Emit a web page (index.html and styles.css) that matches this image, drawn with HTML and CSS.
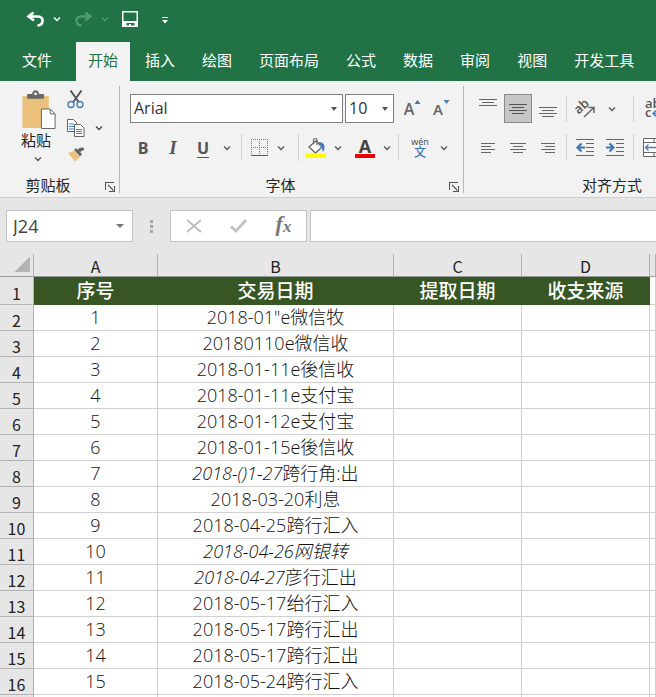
FILE: index.html
```html
<!DOCTYPE html>
<html lang="zh-CN">
<head>
<meta charset="utf-8">
<title>Excel</title>
<link rel="stylesheet" href="styles.css">
</head>
<body>
<svg class="defs" aria-hidden="true">
  <symbol id="chev" viewBox="0 0 8 6"><path d="M1 1.5 4 4.5 7 1.5" fill="none" stroke="currentColor" stroke-width="1.3"/></symbol>
  <symbol id="launch" viewBox="0 0 10 10"><path d="M.5 8V.5H9M3 3l5.5 5.5M9.500 4v5.500H4" fill="none" stroke="#555" stroke-width="1.100"/></symbol>
</svg>
<header class="top">
  <div class="quick">
    <button class="undo" aria-label="撤消"><svg width="19" height="17" viewBox="0 0 19 17"><path d="M7.500 1.500 2.500 5.500l5.500 4M3 5.500h9c6.500 0 6 8.500-.5 9" fill="none" stroke="#fff" stroke-width="2.600"/></svg></button>
    <button class="drop" aria-label="撤消列表"><svg width="8" height="6"><use href="#chev"/></svg></button>
    <button class="redo" aria-label="恢复"><svg width="19" height="17" viewBox="0 0 19 17"><path d="m11.500 1.500 5 4-5.500 4M16 5.500H7c-6.500 0-6 8.500.5 9" fill="none" stroke="#4f9a70" stroke-width="2.400"/></svg></button>
    <button class="drop dim" aria-label="恢复列表"><svg width="8" height="6"><use href="#chev"/></svg></button>
    <button class="save" aria-label="保存"><svg width="16" height="16" viewBox="0 0 16 16"><path d="M.75.75h14.500v14.500H.75z" fill="none" stroke="#fff" stroke-width="1.500"/><path d="M1 10h14v5.500h-2.500V12h-8v3.500H1zM7 13h2v2.500H7z" fill="#fff"/></svg></button>
    <button class="more" aria-label="自定义"><svg width="6" height="7" viewBox="0 0 6 7"><path d="M0 .5h6" stroke="#fff"/><path d="M0 3h6L3 6.500z" fill="#fff"/></svg></button>
  </div>
  <nav class="tabs">
    <a class="file" href="#">文件</a><a class="on" href="#">开始</a><a href="#">插入</a><a href="#">绘图</a><a href="#">页面布局</a><a href="#">公式</a><a href="#">数据</a><a href="#">审阅</a><a href="#">视图</a><a href="#">开发工具</a>
  </nav>
</header>

<section class="ribbon">
  <div class="group clip">
    <div class="tools">
      <button class="paste">
        <svg width="36" height="39" viewBox="0 0 36 40"><path d="M1 6h27v33H1z" fill="#eac07a"/><path d="M6 4h5c0-5 7-5 7 0h5v5H6z" fill="#666"/><circle cx="14.500" cy="4" r="1.500" fill="#f2f2f2"/><path d="M20.500 19.500h9l5 5v15h-14z" fill="#fff" stroke="#666"/><path d="M29.500 19.500v5h5" fill="none" stroke="#666"/></svg>
        <span>粘贴</span>
        <svg class="arrow" width="8" height="6"><use href="#chev"/></svg>
      </button>
      <div class="clipside">
        <button aria-label="剪切"><svg width="18" height="19" viewBox="0 0 18 19"><path d="M3.500.5 12 12.500M14.500.5 6 12.500" stroke="#555" stroke-width="2"/><circle cx="4" cy="14.500" r="3" fill="none" stroke="#4a7ebb" stroke-width="1.400"/><circle cx="13" cy="14.500" r="3" fill="none" stroke="#4a7ebb" stroke-width="1.400"/></svg></button>
        <div class="pair">
          <button aria-label="复制"><svg width="18" height="18" viewBox="0 0 18 18"><path d="M.5.5h6l3 3v9h-9z" fill="#fff" stroke="#666"/><path d="M2 5h5M2 7.500h5M2 10h5" stroke="#4a7ebb"/><path d="M7.500 5.500h6l3.500 3.500v8.500H7.500z" fill="#fff" stroke="#666"/><path d="M9 10.500h6M9 12.500h6M9 14.500h6" stroke="#4a7ebb"/></svg></button>
          <button aria-label="复制选项"><svg width="8" height="6"><use href="#chev"/></svg></button>
        </div>
        <button aria-label="格式刷"><svg width="18" height="15" viewBox="0 0 18 15"><path d="m1 6 6-2 6 6-5 4.500z" fill="#eac07a"/><path d="m7 3 2-2 6 6-2 2.500z" fill="#666"/><path d="m11 5 3.500-3.500" stroke="#666" stroke-width="3.500"/><circle cx="15.500" cy="2" r="1.500" fill="#555"/></svg></button>
      </div>
    </div>
    <div class="caption"><span>剪贴板</span><button aria-label="剪贴板设置"><svg width="10" height="10"><use href="#launch"/></svg></button></div>
  </div>

  <div class="group font">
    <div class="tools rows">
      <div class="row">
        <span class="combo face"><select aria-label="字体"><option>Arial</option></select></span>
        <span class="combo size"><select aria-label="字号"><option>10</option></select></span>
        <button class="grow" aria-label="增大字号">A<svg width="7" height="4" viewBox="0 0 6 4"><path d="M0 4h6L3 0z" fill="#4a6f9f"/></svg></button>
        <button class="shrink" aria-label="减小字号">A<svg width="7" height="4" viewBox="0 0 6 4"><path d="M0 0h6L3 4z" fill="#4a7ebb"/></svg></button>
      </div>
      <div class="row style">
        <button class="b">B</button>
        <button class="i">I</button>
        <button class="u">U</button>
        <button class="dd" aria-label="下划线选项"><svg width="8" height="6"><use href="#chev"/></svg></button>
        <i class="rule"></i>
        <button class="ic" aria-label="边框"><svg width="17" height="17" viewBox="0 0 17 17"><path d="M0 .5h17M0 8.500h17M.5 0v17M8.500 0v17M16.500 0v17" stroke="#777" stroke-dasharray="1 1"/><path d="M0 16.500h17" stroke="#555"/></svg></button>
        <button class="dd" aria-label="边框选项"><svg width="8" height="6"><use href="#chev"/></svg></button>
        <i class="rule"></i>
        <button class="ic" aria-label="填充颜色"><svg width="20" height="20" viewBox="0 0 20 20"><path d="m3 9 7-6 6 6-6.500 6z" fill="#fff" stroke="#666" stroke-width="1.300"/><path d="M7.500 6V2c0-2 3.500-2 3.500 0v5" fill="none" stroke="#666" stroke-width="1.200"/><path d="M13 4c6 0 7 6 4 10-1-3-1-5-4-7z" fill="#4a7ebb"/><path d="M0 15.500h20V20H0z" fill="#ff0"/></svg></button>
        <button class="dd" aria-label="填充选项"><svg width="8" height="6"><use href="#chev"/></svg></button>
        <button class="color" aria-label="字体颜色">A</button>
        <button class="dd" aria-label="颜色选项"><svg width="8" height="6"><use href="#chev"/></svg></button>
        <i class="rule"></i>
        <button class="pinyin"><span>wén</span><b>文</b></button>
        <button class="dd" aria-label="拼音选项"><svg width="8" height="6"><use href="#chev"/></svg></button>
      </div>
    </div>
    <div class="caption"><span>字体</span><button aria-label="字体设置"><svg width="10" height="10"><use href="#launch"/></svg></button></div>
  </div>

  <div class="group align">
    <div class="tools rows">
      <div class="row">
        <button class="al" aria-label="顶端对齐"><svg width="18" height="20" viewBox="0 0 18 20"><path d="M0 .5h18M3 3.500h12M0 6.500h18" stroke="#666"/></svg></button>
        <button class="al on" aria-label="垂直居中"><svg width="18" height="20" viewBox="0 0 18 20"><path d="M0 5.500h18M3 8.500h12M0 11.500h18M3 14.500h12" stroke="#555"/></svg></button>
        <button class="al" aria-label="底端对齐"><svg width="18" height="20" viewBox="0 0 18 20"><path d="M0 8.500h18M3 11.500h12M0 14.500h18M3 17.500h12" stroke="#666"/></svg></button>
        <i class="rule"></i>
        <button class="orient" aria-label="方向"><svg width="20" height="20" viewBox="0 0 20 20"><g transform="rotate(-42 7 9)"><text x="-1" y="11" class="ab">ab</text></g><path d="m8 18 10-9.500M12.500 8.500H18v5.500" fill="none" stroke="#666" stroke-width="1.500"/></svg></button>
        <button class="dd" aria-label="方向选项"><svg width="8" height="6"><use href="#chev"/></svg></button>
        <i class="rule"></i>
        <button class="wrap" aria-label="自动换行"><svg width="22" height="24" viewBox="0 0 22 24"><text x="2" y="11" class="ab">ab</text><text x="2" y="20" class="ab">c</text><path d="M16 16.500h-6m3-3-3 3 3 3" fill="none" stroke="#4a7ebb" stroke-width="1.500"/></svg></button>
      </div>
      <div class="row">
        <button class="al" aria-label="左对齐"><svg width="18" height="12" viewBox="0 0 18 12"><path d="M2 1.500h14M2 4.500h10M2 7.500h14M2 10.500h10" stroke="#666"/></svg></button>
        <button class="al" aria-label="居中"><svg width="18" height="12" viewBox="0 0 18 12"><path d="M1 1.500h16M4 4.500h10M1 7.500h16M4 10.500h10" stroke="#666"/></svg></button>
        <button class="al" aria-label="右对齐"><svg width="18" height="12" viewBox="0 0 18 12"><path d="M2 1.500h14M6 4.500h10M2 7.500h14M6 10.500h10" stroke="#666"/></svg></button>
        <i class="rule"></i>
        <button class="ind" aria-label="减少缩进"><svg width="18" height="17" viewBox="0 0 18 17"><path d="M0 .5h18M10 4.500h8M10 8.500h8M10 12.500h8M0 16.500h18" stroke="#666"/><path d="M9 8.500H1.500M5.500 4.500l-4 4 4 4" fill="none" stroke="#3f76b5" stroke-width="2.200"/></svg></button>
        <button class="ind" aria-label="增加缩进"><svg width="18" height="17" viewBox="0 0 18 17"><path d="M0 .5h18M10 4.500h8M10 8.500h8M10 12.500h8M0 16.500h18" stroke="#666"/><path d="M0 8.500h7.500M3.500 4.500l4 4-4 4" fill="none" stroke="#3f76b5" stroke-width="2.200"/></svg></button>
        <i class="rule"></i>
        <button class="wrap" aria-label="合并后居中"><svg width="22" height="19" viewBox="0 0 22 19"><path d="M.5.5h21v18H.5zM0 4.500h22M0 14.500h22M11 0v4.500M11 14.500V19" fill="#fff" stroke="#666"/><path d="M2 9.500h18M5.500 6.500l-3 3 3 3M16.500 6.500l3 3-3 3" fill="none" stroke="#4a7ebb" stroke-width="1.300"/></svg></button>
      </div>
    </div>
    <div class="caption"><span>对齐方式</span></div>
  </div>
</section>

<section class="formula">
  <div class="namebox"><input aria-label="名称框" value="J24"><button aria-label="名称列表"></button></div>
  <div class="grip"><i></i><i></i><i></i></div>
  <div class="fx">
    <button aria-label="取消"><svg width="16" height="14" viewBox="0 0 16 14"><path d="m1 1 14 12M15 1 1 13" stroke="#bdbdbd" stroke-width="1.800"/></svg></button>
    <button aria-label="输入"><svg width="17" height="14" viewBox="0 0 17 14"><path d="m1 7.500 5 4.500L16 1" fill="none" stroke="#c3c3c3" stroke-width="3"/></svg></button>
    <button class="fn" aria-label="插入函数">f<sub>x</sub></button>
  </div>
  <input class="entry" aria-label="编辑栏">
</section>

<table class="sheet">
  <colgroup><col class="cn"><col class="ca"><col class="cb"><col class="cc"><col class="cc"><col></colgroup>
  <thead><tr><th class="corner"></th><th>A</th><th>B</th><th>C</th><th>D</th><th></th></tr></thead>
  <tbody>
    <tr class="head"><th>1</th><td>序号</td><td>交易日期</td><td>提取日期</td><td>收支来源</td><td></td></tr>
    <tr><th>2</th><td>1</td><td>2018-01"e微信牧</td><td></td><td></td><td></td></tr>
    <tr><th>3</th><td>2</td><td>20180110e微信收</td><td></td><td></td><td></td></tr>
    <tr><th>4</th><td>3</td><td>2018-01-11e後信收</td><td></td><td></td><td></td></tr>
    <tr><th>5</th><td>4</td><td>2018-01-11e支付宝</td><td></td><td></td><td></td></tr>
    <tr><th>6</th><td>5</td><td>2018-01-12e支付宝</td><td></td><td></td><td></td></tr>
    <tr><th>7</th><td>6</td><td>2018-01-15e後信收</td><td></td><td></td><td></td></tr>
    <tr><th>8</th><td>7</td><td><em>2018-()1-27</em>跨行角:出</td><td></td><td></td><td></td></tr>
    <tr><th>9</th><td>8</td><td>2018-03-20利息</td><td></td><td></td><td></td></tr>
    <tr><th>10</th><td>9</td><td>2018-04-25跨行汇入</td><td></td><td></td><td></td></tr>
    <tr><th>11</th><td>10</td><td><em>2018-04-26网银转</em></td><td></td><td></td><td></td></tr>
    <tr><th>12</th><td>11</td><td><em>2018-04-27</em>彦行汇出</td><td></td><td></td><td></td></tr>
    <tr><th>13</th><td>12</td><td>2018-05-17绐行汇入</td><td></td><td></td><td></td></tr>
    <tr><th>14</th><td>13</td><td>2018-05-17跨行汇出</td><td></td><td></td><td></td></tr>
    <tr><th>15</th><td>14</td><td>2018-05-17跨行汇出</td><td></td><td></td><td></td></tr>
    <tr><th>16</th><td>15</td><td>2018-05-24跨行汇入</td><td></td><td></td><td></td></tr>
    <tr><th></th><td></td><td></td><td></td><td></td><td></td></tr>
  </tbody>
</table>
</body>
</html>
```
FILE: styles.css
```css
* { box-sizing: border-box; }
html { height: 100%; }
body {
  margin: 0;
  height: 100%;
  overflow: hidden;
  background: #fff;
  font: 15px/20px "Open Sans", "Noto Sans CJK SC", sans-serif;
  color: #262626;
}
button, input, select { font: inherit; color: inherit; border: 0; padding: 0; margin: 0; background: none; border-radius: 0; outline: 0; }
button { display: flex; align-items: center; justify-content: center; flex: none; }
svg { display: block; flex: none; overflow: visible; }
.defs { position: absolute; width: 0; height: 0; }

.top { background: #217346; color: #fff; }
.quick { display: flex; align-items: center; height: 42px; padding: 0 0 4px 26px; }
.drop { margin: 0 13px 0 8px; }
.dim { color: #4f9a70; }
.more { margin-left: 24px; padding-top: 2px; }
.tabs { display: flex; gap: 3px; height: 39px; padding-left: 10px; white-space: nowrap; }
.tabs a { display: flex; align-items: center; padding: 0 12px 3px; color: #fff; text-decoration: none; }
.tabs .file { margin-right: 9px; }
.tabs .on { background: #f3f3f3; color: #217346; }

.ribbon { display: flex; height: 117px; background: #f2f2f2; border-bottom: 1px solid #cfcfcf; overflow: hidden; color: #444; }
.group { display: flex; flex-direction: column; flex: none; margin: 5px 0 4px; border-right: 1px solid #b8b8b8; }
.tools { flex: 1; display: flex; }
.caption { display: flex; align-items: center; justify-content: center; height: 16px; color: #262626; }
.caption span { flex: 1; text-align: center; }
.clip { width: 120px; }
.clip .caption, .font .caption { padding-right: 4px; }
.font .caption span { padding-right: 8px; }
.clip .caption span { padding-right: 9px; }
.caption button { margin-top: 4px; }
.paste { flex-direction: column; width: 72px; padding: 4px 0 0; justify-content: flex-start; color: #262626; }
.paste span { margin: 1px 0 6px; }
.paste svg:first-child { margin-left: 5px; }
.paste .arrow { margin-left: 4px; color: #555; }
.clipside { display: flex; flex-direction: column; align-items: flex-start; gap: 10px; padding-top: 4px; margin-left: -5px; }
.pair { display: flex; gap: 10px; }

.font { width: 344px; }
.rows { flex-direction: column; gap: 11px; padding-top: 8px; }
.row { display: flex; align-items: center; height: 29px; }
.row:last-child { height: 27px; }
.font .rows { padding-left: 10px; }
.combo { position: relative; display: block; height: 29px; border: 1px solid #7f7f7f; background: #fff; }
.combo::after { content: ""; position: absolute; right: 5px; top: 12px; border: 3px solid transparent; border-top: 4px solid #555; border-bottom: 0; pointer-events: none; }
.combo select { appearance: none; display: block; width: 100%; height: 27px; padding: 0 0 2px 3px; font-size: 16px; color: #333; }
.face { width: 213px; margin-right: 2px; }
.size { width: 49px; }
.grow, .shrink { width: 29px; height: 27px; font-size: 16px; font-weight: 600; color: #666; }
.grow svg, .shrink svg { align-self: flex-start; margin-top: 5px; }
.shrink { font-size: 15px; }
.style button { height: 27px; }
.grow { margin-left: 4px; }
.style .b, .style .i, .style .u { width: 30px; font-weight: 700; color: #555; font-size: 16px; }
.b { margin-left: -2px; }
.i { font-family: "Liberation Serif", serif; font-style: italic; }
.style .i { font-size: 19px; }
.u { text-decoration: underline; text-underline-offset: 3px; text-decoration-thickness: 1px; }
.dd { width: 18px; color: #555; }
.rule { flex: none; width: 1px; height: 27px; background: #d2d2d2; margin: 0 7px 0 5px; }
.ic { width: 20px; }
.ic + .dd { width: 24px; }
.style .color { width: 20px; height: 20px; margin: 0 3px 0 5px; border-bottom: 4px solid #e00; font-size: 18px; font-weight: 700; line-height: 16px; }
.pinyin { flex-direction: column; width: 30px; font-size: 9px; line-height: 10px; }
.pinyin b { font-size: 12px; line-height: 12px; font-weight: 500; color: #3f76b5; }
.color ~ .rule { margin: 0 6px 0 2px; }

.align { width: 296px; border: 0; }
.align .rows { padding-left: 10px; }
.al { width: 28px; height: 29px; margin-right: 2px; }
.al.on { background: #c6c6c6; border: 1px solid #8a8a8a; }
.align .rule { margin: 0 8px 0 2px; }
.orient { width: 22px; }
.orient + .dd { width: 30px; }
.align .orient ~ .rule, .align .ind ~ .rule { margin: 0 9px 0 6px; }
.ind { width: 20px; margin-right: 10px; }
.ind + .ind { margin-right: 2px; }
.ab { font: 600 13px "Open Sans", sans-serif; fill: #555; }

.formula { display: flex; align-items: center; height: 56px; padding-left: 6px; background: #e6e6e6; }
.namebox { display: flex; align-items: center; width: 127px; }
.namebox, .fx, .entry { height: 32px; background: #fff; border: 1px solid #c2c2c2; }
.namebox input { flex: 1; min-width: 0; padding-left: 6px; font-size: 18px; color: #444; }
.namebox button { margin-right: 8px; border: 4px solid transparent; border-top: 4px solid #777; border-bottom: 0; }
.grip { display: flex; flex-direction: column; gap: 2px; width: 37px; align-items: center; }
.grip i { width: 3px; height: 3px; background: #a6a6a6; }
.fx { display: flex; align-items: center; width: 137px; margin-right: 3px; }
.fx button { width: 45px; }
.fx .fn { font: italic 700 22px/24px "Liberation Serif", serif; color: #777; padding-bottom: 4px; }
.fn sub { font-size: 17px; line-height: 18px; align-self: flex-end; }
.entry.entry { flex: 1; min-width: 0; border-right: 0; }

.sheet { width: 100%; table-layout: fixed; border-collapse: separate; border-spacing: 0; }
.cn { width: 34px; }
.ca { width: 124px; }
.cb { width: 236px; }
.cc { width: 128px; }
.sheet th, .sheet td { height: 26px; padding: 0; border-right: 1px solid #d0d0d0; border-bottom: 1px solid #d0d0d0; text-align: center; white-space: nowrap; overflow: hidden; }
.sheet td { padding-bottom: 2px; font-size: 18px; font-weight: 300; color: #111; }
.sheet th { padding-top: 4px; background: #e6e6e6; border-color: #b2b2b2; font: 400 16px/20px "Noto Sans CJK SC", sans-serif; color: #222; }
.sheet thead th { height: 23px; padding-top: 2px; border-bottom-color: #999; }
.sheet .corner { background: linear-gradient(135deg, transparent 50%, #b4b4b4 50%) 15px 3px / 15px 15px no-repeat #e6e6e6; }
.sheet .head th, .sheet .head td { height: 28px; }
.sheet .head td:not(:last-child) { padding-bottom: 0; background: #375623; border-color: #375623; color: #fff; font-size: 19px; font-weight: 500; }
```
